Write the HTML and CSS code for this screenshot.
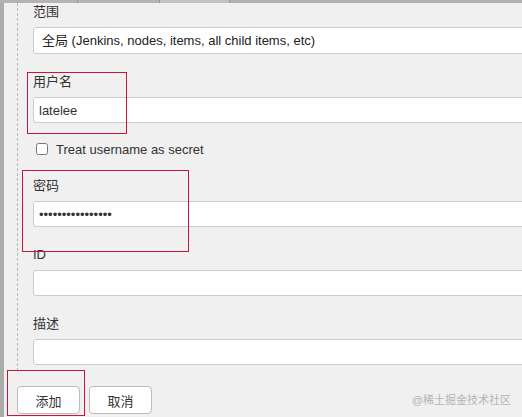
FILE: index.html
```html
<!DOCTYPE html>
<html lang="zh-CN">
<head>
    <meta charset="UTF-8">
    <meta name="viewport" content="width=device-width, initial-scale=1.0">
    <title>添加凭据</title>
    <link rel="stylesheet" href="styles.css">
</head>
<body>
    <div class="screen">
        <div class="tabbar">
            <span class="tab" style="width: 77px"></span>
            <span class="tab" style="width: 81px"></span>
            <span class="tab tab-light" style="width: 69px"></span>
            <span class="tab tab-rest"></span>
        </div>

        <div class="frame">
            <div class="panel">
                <div class="field first">
                    <label class="field-label">范围</label>
                    <div class="select">全局 (Jenkins, nodes, items, all child items, etc)</div>
                </div>

                <div class="field">
                    <label class="field-label">用户名</label>
                    <input class="text-input" type="text" value="latelee">
                </div>

                <label class="check-row">
                    <input type="checkbox">
                    <span>Treat username as secret</span>
                </label>

                <div class="field">
                    <label class="field-label">密码</label>
                    <input class="text-input" type="password" value="latelee123456789">
                </div>

                <div class="field">
                    <label class="field-label">ID</label>
                    <input class="text-input" type="text">
                </div>

                <div class="field">
                    <label class="field-label">描述</label>
                    <input class="text-input" type="text">
                </div>
            </div>

            <div class="actions">
                <button class="btn">添加</button>
                <button class="btn">取消</button>
            </div>
        </div>

        <!-- red highlight marks -->
        <div class="mark" style="left: 27px; top: 72px; width: 98px; height: 60px"></div>
        <div class="mark" style="left: 22px; top: 170px; width: 165px; height: 80px"></div>
        <div class="mark" style="left: 7px; top: 370px; width: 76px; height: 44px"></div>

        <div class="watermark">@稀土掘金技术社区</div>
    </div>
</body>
</html>
```

FILE: styles.css
```css
body {
    margin: 0;
    background: #f0f0f0;
    font-family: "Liberation Sans", Arial, "Noto Sans CJK SC", sans-serif;
    color: #333;
    overflow: hidden;
}
.screen {
    position: relative;
    width: 522px;
    height: 417px;
    overflow: hidden;
}
.tabbar {
    display: flex;
    height: 3px;
    background: #b2b2b2;
}
.tab {
    height: 3px;
    background: #b4b4b4;
    border-right: 1px solid #999;
}
.tab-light {
    background: #c2c2c2;
}
.tab-rest {
    flex: 1;
    border-right: none;
    background: #b0b0b0;
}
.frame {
    border-left: 4px solid #ababab;
    height: 414px;
}
.panel {
    margin-left: 13px;
    border-left: 1px dashed #b8b8b8;
    padding-left: 15px;
    padding-bottom: 6px;
}
.field {
    margin-top: 19px;
}
.field.first {
    margin-top: 0;
}
.field-label {
    display: block;
    font-size: 13px;
    line-height: 18px;
    margin-bottom: 6px;
}
.select {
    width: 520px;
    height: 25px;
    line-height: 25px;
    padding-left: 8px;
    font-size: 13px;
    color: #222;
    background: #fff;
    border: 1px solid #ccc;
    border-radius: 3px;
}
.text-input {
    display: block;
    box-sizing: border-box;
    width: 520px;
    height: 26px;
    margin: 0;
    padding: 0 5px;
    font-family: inherit;
    font-size: 13px;
    color: #333;
    background: #fff;
    border: 1px solid #ccc;
    border-radius: 3px;
    outline: none;
}
.check-row {
    display: flex;
    align-items: center;
    gap: 8px;
    margin-top: 17px;
    height: 18px;
    font-size: 13px;
}
.check-row input {
    width: 12px;
    height: 12px;
    margin: 0 0 0 3px;
}
.actions {
    display: flex;
    gap: 9px;
    margin-left: 13px;
    padding-top: 15px;
}
.btn {
    width: 63px;
    height: 28px;
    padding: 0;
    font-family: inherit;
    font-size: 13px;
    color: #333;
    background: #fff;
    border: 1px solid #bbb;
    border-radius: 4px;
}
.mark {
    position: absolute;
    border: 1px solid #c8163a;
}
.watermark {
    position: absolute;
    right: 11px;
    top: 392px;
    font-size: 11px;
    line-height: 16px;
    color: #b4b4b4;
}
```
